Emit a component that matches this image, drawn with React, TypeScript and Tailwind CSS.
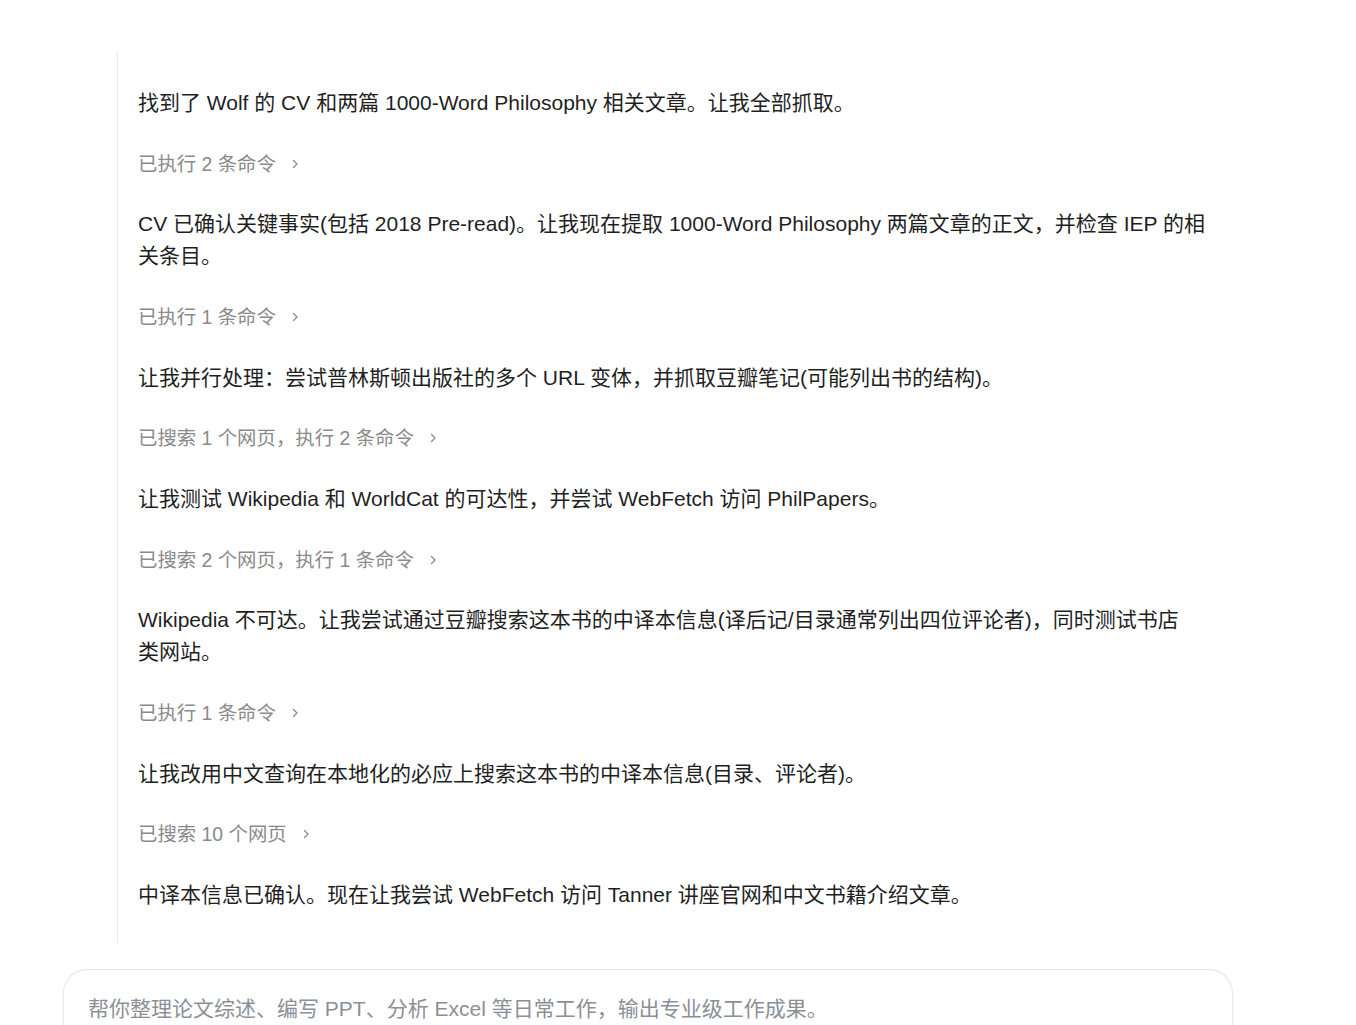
import React from "react";

const Chevron = () => (
  <svg width="8" height="10" viewBox="0 0 8 10" fill="none" className="ml-[15px] shrink-0">
    <path d="M2.5 1.5 L6 5 L2.5 8.5" stroke="#8a8a8a" strokeWidth="1.3" strokeLinecap="round" strokeLinejoin="round" />
  </svg>
);

const Text = ({ children }: { children: React.ReactNode }) => (
  <p className="text-[21px] leading-[32px] text-[#1f1f1f]">{children}</p>
);

const Step = ({ children }: { children: React.ReactNode }) => (
  <div className="flex items-center h-[32px] text-[19.4px] leading-[32px] text-[#8a8a8a]">
    <span>{children}</span>
    <Chevron />
  </div>
);

export default function App() {
  return (
    <div
      className="min-h-screen bg-white"
      style={{ fontFamily: '"Liberation Sans", "Noto Sans CJK SC", sans-serif' }}
    >
      <div className="pt-[52px] pl-[63px]">
        <div className="ml-[54px] w-[1093px] border-l border-[#e8e8e8] pl-[20px] pt-[35px] pb-[32px] flex flex-col gap-[28.67px]">
          <Text>找到了 Wolf 的 CV 和两篇 1000-Word Philosophy 相关文章。让我全部抓取。</Text>
          <Step>已执行 2 条命令</Step>
          <Text>
            CV 已确认关键事实(包括 2018 Pre-read)。让我现在提取 1000-Word Philosophy 两篇文章的正文，并检查 IEP 的相关条目。
          </Text>
          <Step>已执行 1 条命令</Step>
          <Text>让我并行处理：尝试普林斯顿出版社的多个 URL 变体，并抓取豆瓣笔记(可能列出书的结构)。</Text>
          <Step>已搜索 1 个网页，执行 2 条命令</Step>
          <Text>让我测试 Wikipedia 和 WorldCat 的可达性，并尝试 WebFetch 访问 PhilPapers。</Text>
          <Step>已搜索 2 个网页，执行 1 条命令</Step>
          <Text>
            Wikipedia 不可达。让我尝试通过豆瓣搜索这本书的中译本信息(译后记/目录通常列出四位评论者)，同时测试书店
            <br />
            类网站。
          </Text>
          <Step>已执行 1 条命令</Step>
          <Text>让我改用中文查询在本地化的必应上搜索这本书的中译本信息(目录、评论者)。</Text>
          <Step>已搜索 10 个网页</Step>
          <Text>中译本信息已确认。现在让我尝试 WebFetch 访问 Tanner 讲座官网和中文书籍介绍文章。</Text>
        </div>
        <div className="mt-[26px] w-[1170px] h-[80px] rounded-t-[24px] border border-b-0 border-[#e5e5e5] px-[24px] pt-[23px]">
          <p className="text-[21px] leading-[32px] text-[#8b8f97]">
            帮你整理论文综述、编写 PPT、分析 Excel 等日常工作，输出专业级工作成果。
          </p>
        </div>
      </div>
    </div>
  );
}
